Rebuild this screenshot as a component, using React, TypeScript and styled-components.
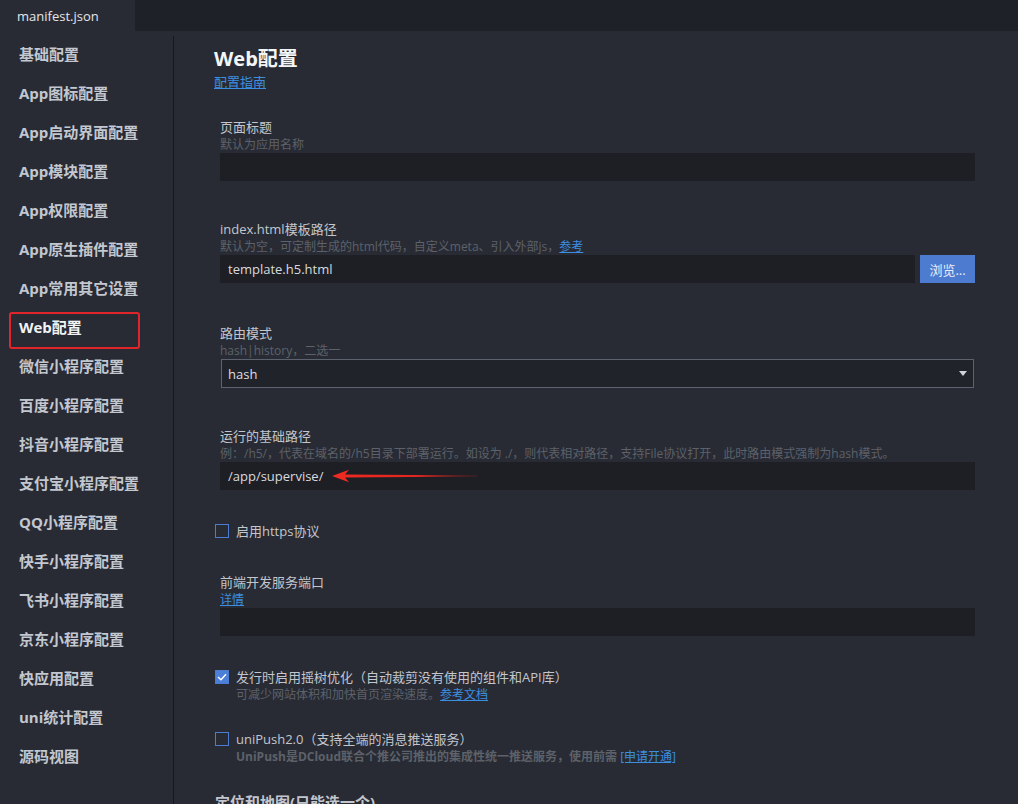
import React from "react";
import styled, { createGlobalStyle } from "styled-components";

const GlobalStyle = createGlobalStyle`
  html, body { margin: 0; padding: 0; background: #282b34; overflow: hidden; }
  body { font-family: "Open Sans", "Noto Sans CJK SC", sans-serif; }
  * { box-sizing: border-box; }
`;

const Page = styled.div`
  width: 1018px;
  height: 804px;
  display: flex;
  flex-direction: column;
  background: #282b34;
  overflow: hidden;
`;

const TabBar = styled.div`
  height: 31px;
  flex: none;
  display: flex;
  background: #1f2128;
`;

const Tab = styled.div`
  width: 135px;
  padding-left: 17px;
  display: flex;
  align-items: center;
  background: #282b34;
  color: #e4e5e8;
  font-size: 13px;
`;

const Body = styled.div`
  flex: 1;
  display: flex;
  min-height: 0;
`;

const Sidebar = styled.nav`
  width: 173px;
  flex: none;
  padding-top: 4px;
  display: flex;
  flex-direction: column;
`;

const Divider = styled.div`
  width: 1px;
  flex: none;
  margin-top: 5px;
  background: #17181d;
`;

const NavItem = styled.div<{ $marked?: boolean }>`
  position: relative;
  height: 39px;
  line-height: 39px;
  padding-left: 19px;
  font-size: 15px;
  font-weight: 700;
  color: ${(p) => (p.$marked ? "#f2f3f5" : "#c3c7cf")};
  white-space: nowrap;
  &::after {
    content: "";
    display: ${(p) => (p.$marked ? "block" : "none")};
    position: absolute;
    left: 9px;
    top: 4px;
    width: 127px;
    height: 33px;
    border: 2px solid #e0262a;
    border-radius: 3px;
  }
`;

const Main = styled.main`
  flex: 1;
  padding: 16px 43px 0 40px;
  display: flex;
  flex-direction: column;
  min-width: 0;
`;

const Title = styled.h1`
  margin: 0;
  font-size: 20px;
  line-height: 24px;
  font-weight: 700;
  color: #f4f5f7;
`;

const Link = styled.a`
  color: #3c8fe0;
  text-decoration: underline;
  cursor: pointer;
`;

const TopLink = styled(Link)`
  margin-top: 2px;
  font-size: 13px;
  line-height: 18px;
  align-self: flex-start;
`;

const Field = styled.section<{ $mt: number }>`
  margin-top: ${(p) => p.$mt}px;
  padding-left: 6px;
  display: flex;
  flex-direction: column;
`;

const Label = styled.div`
  font-size: 13px;
  line-height: 18px;
  color: #c3c6cd;
`;

const Hint = styled.div<{ $bold?: boolean }>`
  font-size: 12px;
  line-height: 17px;
  color: #5d6169;
  font-weight: ${(p) => (p.$bold ? 700 : 400)};
  white-space: nowrap;
  a { color: #3c8fe0; font-weight: 400; text-decoration: underline; }
`;

const InputRow = styled.div`
  display: flex;
  gap: 5px;
  position: relative;
`;

const Input = styled.div`
  flex: 1 1 auto;
  min-width: 0;
  height: 28px;
  background: #1e1f24;
  padding-left: 8px;
  display: flex;
  align-items: center;
  font-size: 13px;
  color: #d8dadf;
`;

const Button = styled.button`
  width: 55px;
  height: 28px;
  flex: none;
  border: none;
  background: #4d7bd0;
  color: #e9eefa;
  font-family: inherit;
  font-size: 13px;
  padding: 0;
`;

const Select = styled.div`
  height: 29px;
  margin-right: 1px;
  margin-left: 1px;
  border: 1px solid #5c626e;
  background: #21232a;
  display: flex;
  align-items: center;
  justify-content: space-between;
  padding: 0 6px 0 6px;
  font-size: 13px;
  color: #dcdee2;
`;

const Caret = styled.span`
  width: 0;
  height: 0;
  border-left: 4px solid transparent;
  border-right: 4px solid transparent;
  border-top: 5px solid #d0d3d9;
`;

const Arrow = styled.svg`
  position: absolute;
  left: 112px;
  top: 7px;
`;

const CheckSection = styled.section<{ $mt: number }>`
  margin-top: ${(p) => p.$mt}px;
  padding-left: 1px;
  display: flex;
  flex-direction: column;
`;

const CheckRow = styled.div`
  display: flex;
  align-items: center;
  gap: 7px;
  font-size: 13px;
  line-height: 18px;
  color: #c3c6cd;
`;

const Box = styled.span<{ $checked?: boolean }>`
  width: 14px;
  height: 14px;
  flex: none;
  border: 1px solid #4c7bd0;
  background: ${(p) => (p.$checked ? "#4c7fd8" : "transparent")};
  display: flex;
  align-items: center;
  justify-content: center;
`;

const CheckHint = styled(Hint)`
  padding-left: 21px;
`;

const Heading = styled.h2`
  margin: 27px 0 0 1px;
  font-size: 15px;
  line-height: 20px;
  font-weight: 700;
  color: #c3c6cd;
`;

const navItems = [
  "基础配置",
  "App图标配置",
  "App启动界面配置",
  "App模块配置",
  "App权限配置",
  "App原生插件配置",
  "App常用其它设置",
  "Web配置",
  "微信小程序配置",
  "百度小程序配置",
  "抖音小程序配置",
  "支付宝小程序配置",
  "QQ小程序配置",
  "快手小程序配置",
  "飞书小程序配置",
  "京东小程序配置",
  "快应用配置",
  "uni统计配置",
  "源码视图",
];

export default function App() {
  return (
    <Page>
      <GlobalStyle />
      <TabBar>
        <Tab>manifest.json</Tab>
      </TabBar>
      <Body>
        <Sidebar>
          {navItems.map((n) => (
            <NavItem key={n} $marked={n === "Web配置"}>
              {n}
            </NavItem>
          ))}
        </Sidebar>
        <Divider />
        <Main>
          <Title>Web配置</Title>
          <TopLink>配置指南</TopLink>

          <Field $mt={27}>
            <Label>页面标题</Label>
            <Hint>默认为应用名称</Hint>
            <Input />
          </Field>

          <Field $mt={39}>
            <Label>index.html模板路径</Label>
            <Hint>
              默认为空，可定制生成的html代码，自定义meta、引入外部js，<a>参考</a>
            </Hint>
            <InputRow>
              <Input>template.h5.html</Input>
              <Button>浏览...</Button>
            </InputRow>
          </Field>

          <Field $mt={41}>
            <Label>路由模式</Label>
            <Hint>hash|history，二选一</Hint>
            <Select>
              <span>hash</span>
              <Caret />
            </Select>
          </Field>

          <Field $mt={39}>
            <Label>运行的基础路径</Label>
            <Hint>
              例：/h5/，代表在域名的/h5目录下部署运行。如设为 ./，则代表相对路径，支持File协议打开，此时路由模式强制为hash模式。
            </Hint>
            <InputRow>
              <Input>/app/supervise/</Input>
              <Arrow width="145" height="14" viewBox="0 0 145 14">
                <defs>
                  <linearGradient id="tail" x1="0" x2="1" y1="0" y2="0">
                    <stop offset="0" stopColor="#f02a22" />
                    <stop offset="0.6" stopColor="#e2261f" />
                    <stop offset="1" stopColor="#a8231f" stopOpacity="0.3" />
                  </linearGradient>
                </defs>
                <path
                  d="M0 7 L17 0.8 L13 5.4 L145 6.6 L145 7.4 L13 8.6 L17 13.2 Z"
                  fill="url(#tail)"
                />
              </Arrow>
            </InputRow>
          </Field>

          <CheckSection $mt={32}>
            <CheckRow>
              <Box />
              启用https协议
            </CheckRow>
          </CheckSection>

          <Field $mt={33}>
            <Label>前端开发服务端口</Label>
            <Hint>
              <a>详情</a>
            </Hint>
            <Input />
          </Field>

          <CheckSection $mt={32}>
            <CheckRow>
              <Box $checked>
                <svg width="10" height="8" viewBox="0 0 10 8">
                  <path d="M1 4 L4 6.8 L9 1.2" fill="none" stroke="#ffffff" strokeWidth="1.4" />
                </svg>
              </Box>
              发行时启用摇树优化（自动裁剪没有使用的组件和API库）
            </CheckRow>
            <CheckHint>
              可减少网站体积和加快首页渲染速度。<a>参考文档</a>
            </CheckHint>
          </CheckSection>

          <CheckSection $mt={27}>
            <CheckRow>
              <Box />
              uniPush2.0（支持全端的消息推送服务）
            </CheckRow>
            <CheckHint $bold>
              UniPush是DCloud联合个推公司推出的集成性统一推送服务，使用前需 <a>[申请开通]</a>
            </CheckHint>
          </CheckSection>

          <Heading>定位和地图(只能选一个)</Heading>
        </Main>
      </Body>
    </Page>
  );
}
